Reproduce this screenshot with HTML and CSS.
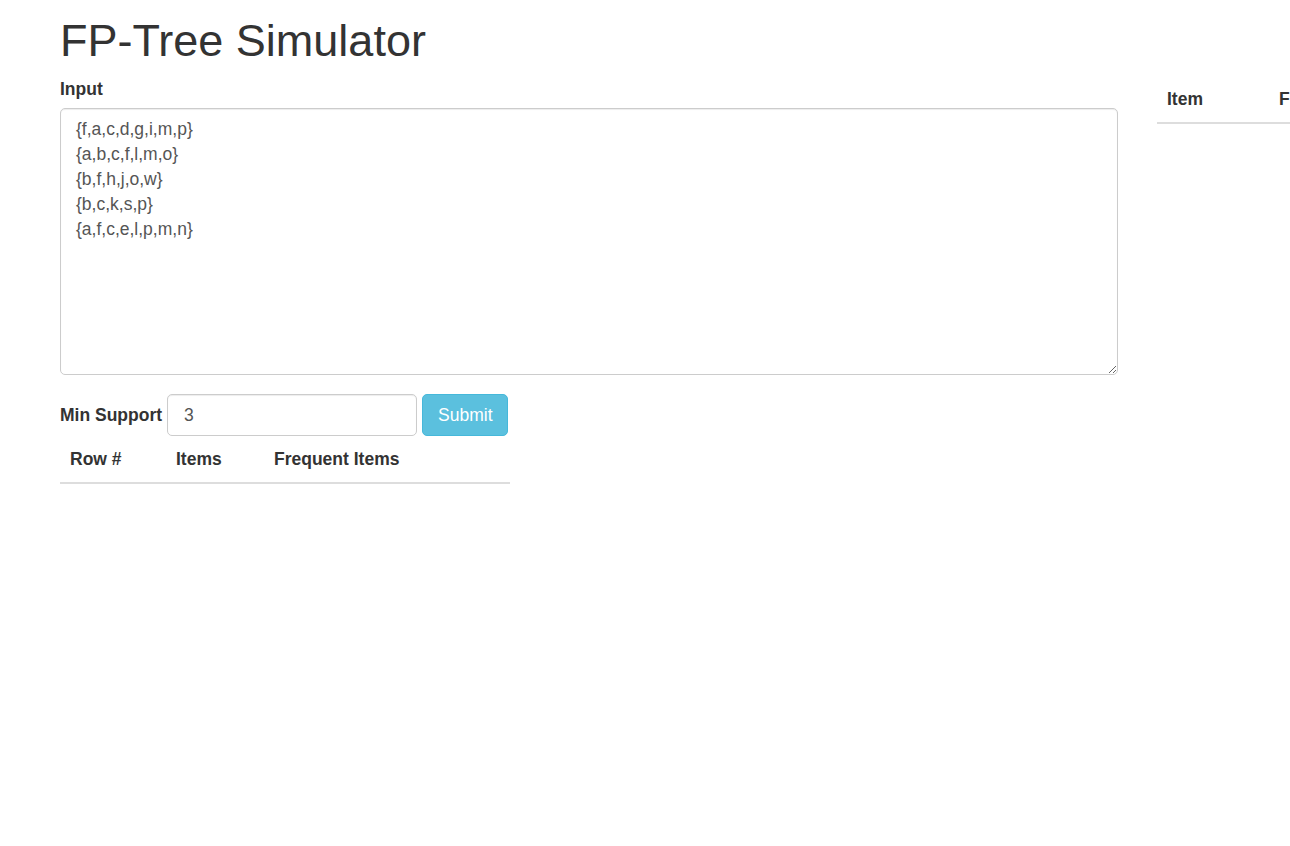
FILE: index.html
```html
<!DOCTYPE html>
<html>
<head>
<meta charset="utf-8">
<title>FP-Tree Simulator</title>
<link rel="stylesheet" href="styles.css">
</head>
<body>
<div class="page">
  <h1 class="title">FP-Tree Simulator</h1>
  <div class="row">
    <div class="main-col">
      <label class="field-label" for="input">Input</label>
      <textarea id="input" class="input-area">{f,a,c,d,g,i,m,p}
{a,b,c,f,l,m,o}
{b,f,h,j,o,w}
{b,c,k,s,p}
{a,f,c,e,l,p,m,n}</textarea>
      <div class="support-row">
        <label class="field-label inline" for="support">Min Support</label>
        <input id="support" class="support-input" type="text" value="3">
        <button class="btn-submit" type="button">Submit</button>
      </div>
      <table class="data-table rows-table">
        <thead>
          <tr>
            <th class="c-row">Row #</th>
            <th class="c-items">Items</th>
            <th class="c-freq">Frequent Items</th>
          </tr>
        </thead>
        <tbody></tbody>
      </table>
    </div>
    <div class="side-col">
      <table class="data-table freq-table">
        <thead>
          <tr>
            <th class="c-item">Item</th>
            <th class="c-count">Frequency</th>
          </tr>
        </thead>
        <tbody></tbody>
      </table>
    </div>
  </div>
</div>
</body>
</html>
```

FILE: styles.css
```css
html, body {
  margin: 0;
  padding: 0;
  overflow: hidden;
  background: #fff;
}
body {
  font-family: "Liberation Sans", Arial, Helvetica, sans-serif;
  font-size: 17.5px;
  line-height: 25px;
  color: #333;
  width: 1290px;
  height: 846px;
}
.page {
  padding-left: 60px;
}
.title {
  font-size: 45px;
  line-height: 49.5px;
  font-weight: 500;
  margin: 16px 0 11px;
  color: #333;
}
.row {
  display: flex;
  gap: 39px;
  align-items: flex-start;
}
.main-col {
  flex: 0 0 1058px;
  width: 1058px;
}
.side-col {
  flex: 0 0 auto;
  width: 400px;
}
.field-label {
  display: block;
  font-weight: bold;
  margin-bottom: 6.5px;
}
.field-label.inline {
  display: inline-block;
  margin-bottom: 0;
}
.input-area {
  display: block;
  box-sizing: border-box;
  width: 1058px;
  height: 267px;
  padding: 7.5px 15px;
  font-family: "Liberation Sans", Arial, Helvetica, sans-serif;
  font-size: 17.5px;
  line-height: 25px;
  color: #555;
  border: 1px solid #ccc;
  border-radius: 5px;
  box-shadow: inset 0 1px 1px rgba(0,0,0,.075);
  margin: 0;
  resize: both;
}
.support-row {
  display: flex;
  align-items: center;
  gap: 5px;
  margin-top: 19px;
}
.support-input {
  box-sizing: border-box;
  width: 250px;
  height: 42px;
  padding: 7.5px 16px;
  font-family: "Liberation Sans", Arial, Helvetica, sans-serif;
  font-size: 17.5px;
  color: #555;
  border: 1px solid #ccc;
  border-radius: 5px;
  box-shadow: inset 0 1px 1px rgba(0,0,0,.075);
  margin: 0;
}
.btn-submit {
  box-sizing: border-box;
  height: 42px;
  width: 86px;
  padding: 7.5px 15px;
  font-family: "Liberation Sans", Arial, Helvetica, sans-serif;
  font-size: 17.5px;
  color: #fff;
  background: #5bc0de;
  border: 1px solid #46b8da;
  border-radius: 5px;
  margin: 0;
}
.data-table {
  border-collapse: collapse;
  border-spacing: 0;
}
.data-table th {
  text-align: left;
  font-weight: bold;
  padding: 10px;
  line-height: 25px;
  border-bottom: 2.5px solid #ddd;
}
.rows-table {
  width: 450px;
  margin-top: 1px;
}
.rows-table .c-row { width: 86px; }
.rows-table .c-items { width: 78px; }
.freq-table {
  width: 400px;
}
.freq-table .c-item { width: 92px; }
```
